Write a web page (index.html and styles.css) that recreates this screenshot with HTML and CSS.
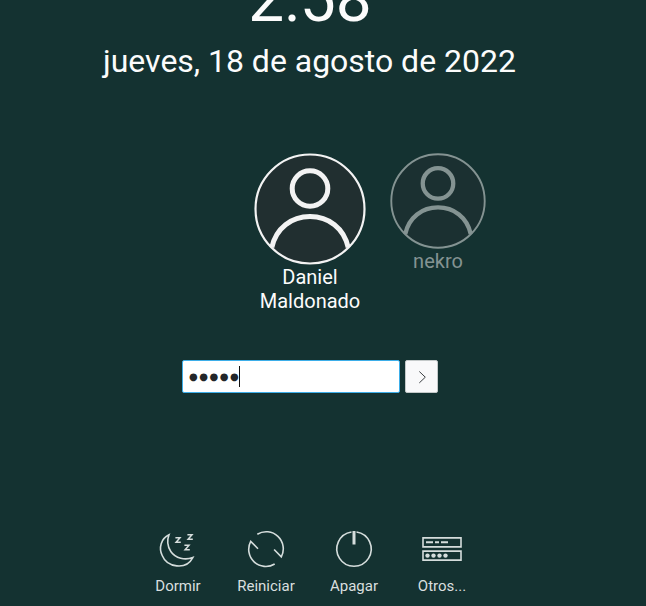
FILE: index.html
```html
<!DOCTYPE html>
<html lang="es">
<head>
<meta charset="utf-8">
<title>Inicio de sesión</title>
<link rel="stylesheet" href="styles.css">
</head>
<body>
<main class="greeter">
  <header class="clock">
    <div class="time">2:58</div>
    <div class="date">jueves, 18 de agosto de 2022</div>
  </header>
  <section class="users">
    <div class="user user-active">
      <svg class="avatar" viewBox="0 0 112 112">
        <circle class="disc" cx="56" cy="56" r="54.5"/>
        <circle class="figure" cx="56" cy="35.5" r="17.8"/>
        <path class="figure" d="M17.8 94.5C22 75 37.5 63.5 56 63.5S90 75 94.2 94.5"/>
      </svg>
      <span class="name">Daniel Maldonado</span>
    </div>
    <div class="user user-idle">
      <svg class="avatar" viewBox="0 0 112 112">
        <circle class="disc" cx="56" cy="56" r="54.5"/>
        <circle class="figure" cx="56" cy="35.5" r="17.8"/>
        <path class="figure" d="M17.8 94.5C22 75 37.5 63.5 56 63.5S90 75 94.2 94.5"/>
      </svg>
      <span class="name">nekro</span>
    </div>
  </section>
  <form class="login">
    <div class="password"><span class="dots">●●●●●</span><span class="caret"></span></div>
    <button class="submit" type="button" aria-label="Entrar">
      <svg width="33" height="33" viewBox="0 0 33 33"><path d="M14.3 11.5l6 5.7-6 5.7"/></svg>
    </button>
  </form>
  <nav class="actions">
    <div class="action">
      <svg viewBox="0 0 48 48">
        <path d="M15 9.8C7 13.5 4.500 23 8.200 30.500C13 42.500 32 45.500 38.800 32.600C31 35.500 21.500 33.500 16.800 26.500C13.200 21 13.200 14.500 15 9.800Z"/>
        <path class="zed" d="M21.4 12.8h4.6l-3.9 4.5h4.7M33.4 9.8h4.6l-3.9 4.5h4.7M30.4 20.3h4.6l-3.9 4.5h4.7"/>
      </svg>
      <span>Dormir</span>
    </div>
    <div class="action">
      <svg viewBox="0 0 48 48">
        <path d="M15.3 9.2A17.1 17.1 0 0 1 39.3 31.800L32.100 24.500M32.700 39A17.100 17.100 0 0 1 8.700 16.400L16 23.700"/>
      </svg>
      <span>Reiniciar</span>
    </div>
    <div class="action">
      <svg viewBox="0 0 48 48">
        <path d="M21.5 7A17.2 17.2 0 1 0 26.5 7"/>
        <path class="thick" d="M24 6V19.5"/>
      </svg>
      <span>Apagar</span>
    </div>
    <div class="action">
      <svg viewBox="0 0 48 48">
        <path d="M5 12.9H43V21.9H5ZM5 26.1H43V35.1H5Z"/>
        <path class="dash" d="M8 17.3h7M17 17.3h4M23 17.3h7"/>
        <g class="fill"><circle cx="9.5" cy="30.6" r="2.2"/><circle cx="15.5" cy="30.6" r="2.2"/><circle cx="21.5" cy="30.6" r="2.2"/><circle cx="27.5" cy="30.6" r="2.2"/></g>
      </svg>
      <span>Otros...</span>
    </div>
  </nav>
</main>
</body>
</html>
```
FILE: styles.css
```css
* { box-sizing: border-box; }

body {
  margin: 0;
  height: 606px;
  overflow: hidden;
  background: #143231;
  color: #fcfcfc;
  font-family: Roboto, "Noto Sans", sans-serif;
}

.greeter {
  width: 620px;
  display: flex;
  flex-direction: column;
  align-items: center;
}

.clock {
  text-align: center;
  white-space: nowrap;
}

.time {
  margin-top: -38px;
  font-size: 64px;
  line-height: 76px;
}

.date {
  margin-top: 4px;
  padding-right: 1px;
  font-size: 32px;
  line-height: 38px;
  letter-spacing: -0.02px;
}

.users {
  display: flex;
  align-items: flex-start;
  gap: 16px;
  height: 207px;
  margin: 73px 0 0 128px;
}

.user {
  width: 112px;
  display: flex;
  flex-direction: column;
  align-items: center;
  text-align: center;
  font-size: 20px;
  line-height: 24px;
}

.avatar {
  display: block;
  width: 112px;
  height: 112px;
  fill: none;
  stroke: #f3f3f3;
}

.disc {
  fill: #212f30;
  stroke-width: 2.2;
}

.figure { stroke-width: 5; }

.user-idle .avatar {
  width: 96px;
  height: 96px;
  stroke: #849392;
}

.user-idle .disc { fill: #1b3031; }

.user-idle .name { color: #849392; }

.login {
  display: flex;
  gap: 5px;
  height: 33px;
}

.password {
  width: 218px;
  display: flex;
  align-items: center;
  padding-left: 6px;
  border: 1px solid #3daee9;
  border-radius: 2px;
  background: #fff;
}

.dots {
  color: #232629;
  font-family: "DejaVu Sans", sans-serif;
  font-size: 10px;
  line-height: 20px;
  letter-spacing: 1.5px;
}

.caret {
  width: 1px;
  height: 21px;
  margin-left: -1px;
  background: #111;
}

.submit {
  width: 33px;
  padding: 0;
  border: 1px solid #c4c9c9;
  border-radius: 2px;
  background: #f9f9fa;
}

.submit svg {
  display: block;
  margin: -1px;
  fill: none;
  stroke: #3c4043;
}

.actions {
  display: flex;
  margin-top: 132px;
}

.action {
  width: 88px;
  display: flex;
  flex-direction: column;
  align-items: center;
  color: #d9dfdf;
  font-size: 15px;
  line-height: 18px;
}

.action svg {
  width: 48px;
  height: 48px;
  margin-bottom: 4px;
  fill: none;
  stroke: #d5dddc;
  stroke-width: 1.6;
}

.action .zed { stroke-width: 1.5; }
.action .thick { stroke-width: 3; }
.action .dash { stroke-width: 2; }
.action .fill { fill: #d5dddc; stroke: none; }
```
